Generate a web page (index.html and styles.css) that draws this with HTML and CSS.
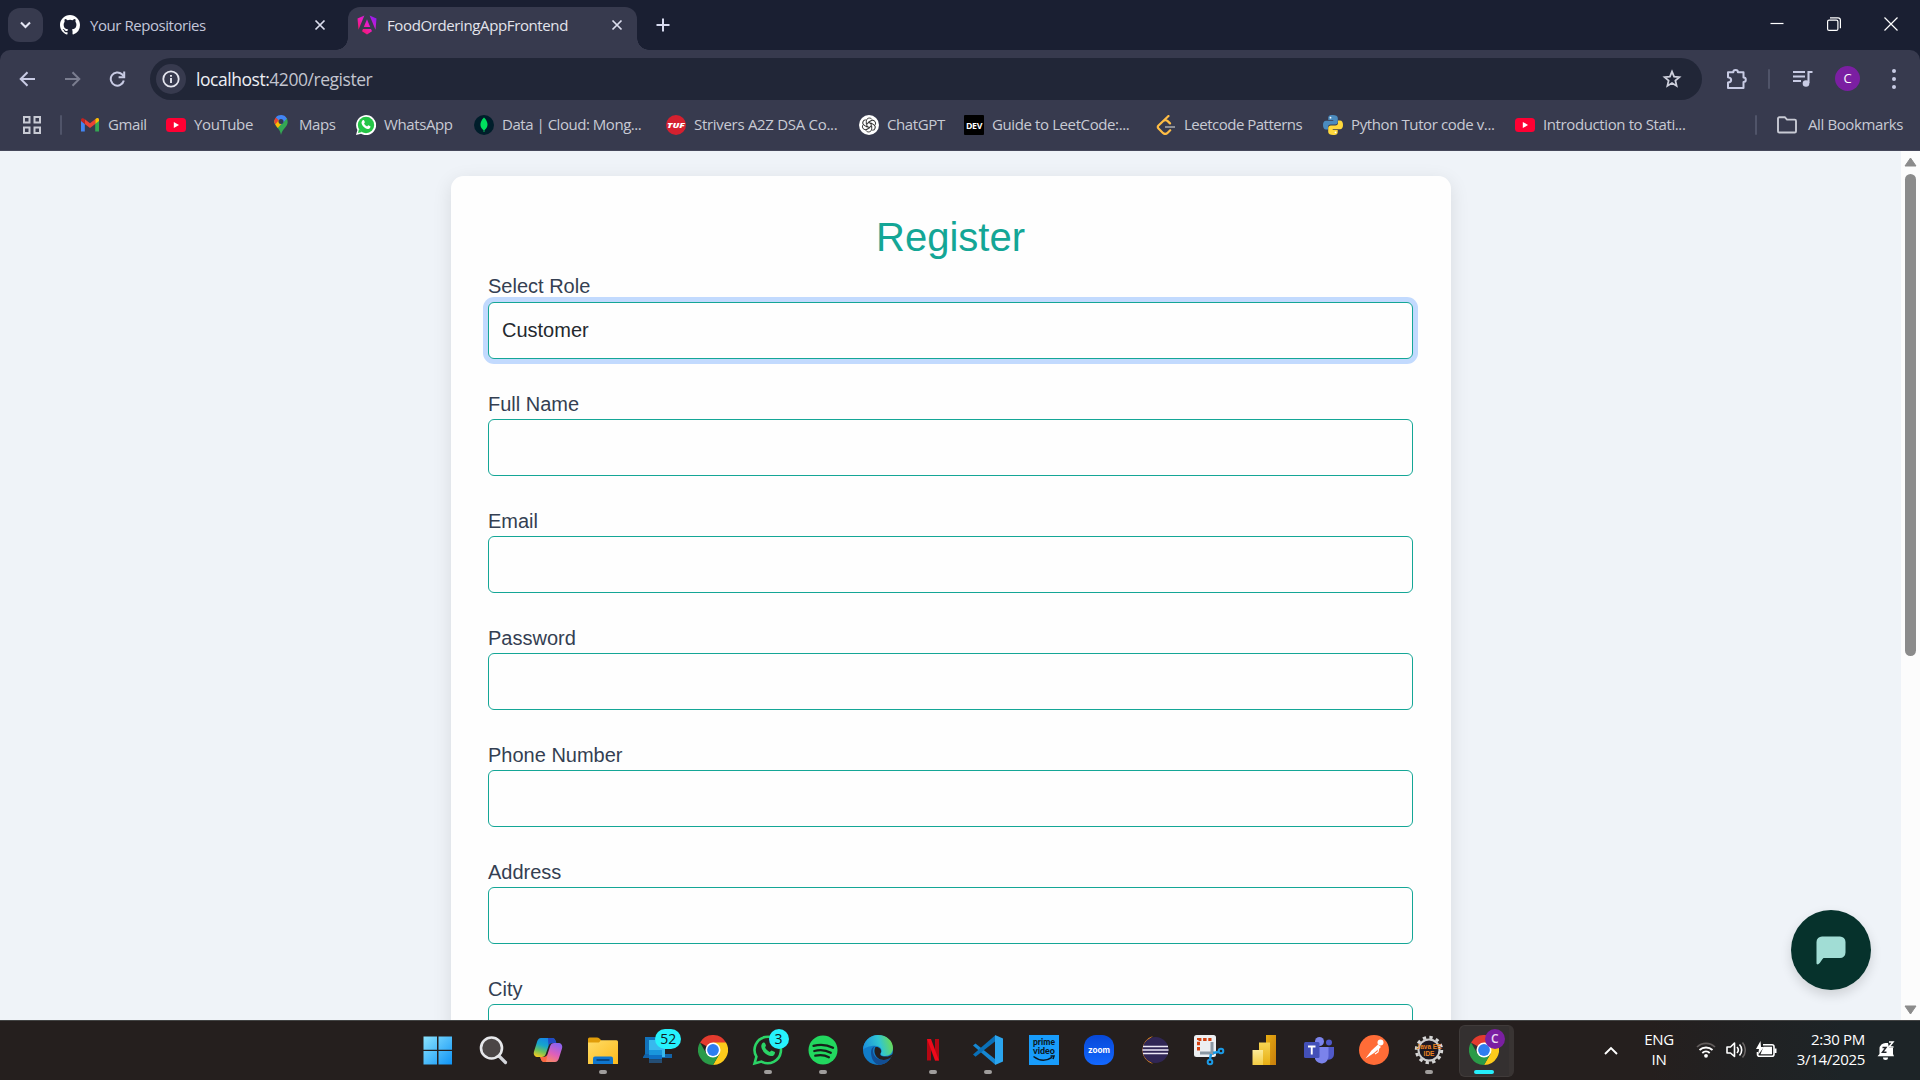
FILE: index.html
```html
<!DOCTYPE html>
<html lang="en">
<head>
<meta charset="utf-8">
<title>FoodOrderingAppFrontend</title>
<link rel="stylesheet" href="styles.css">
</head>
<body>
<svg class="defs" width="0" height="0" aria-hidden="true">
  <defs>
    <linearGradient id="ang" x1="0" y1="1" x2="1" y2="0"><stop offset="0" stop-color="#f5153f"/><stop offset=".5" stop-color="#ee1cc0"/><stop offset="1" stop-color="#7a1dfa"/></linearGradient>
    <linearGradient id="win" x1="0" y1="0" x2="1" y2="1"><stop offset="0" stop-color="#8be4ff"/><stop offset="1" stop-color="#0f93f5"/></linearGradient>
    <linearGradient id="copA" x1=".6" y1="0" x2=".2" y2="1"><stop offset="0" stop-color="#1583e8"/><stop offset=".4" stop-color="#16a5cb"/><stop offset=".7" stop-color="#6cc25b"/><stop offset="1" stop-color="#f5c921"/></linearGradient>
    <linearGradient id="copB" x1=".7" y1="0" x2=".2" y2="1"><stop offset="0" stop-color="#8d63f0"/><stop offset=".5" stop-color="#df5fba"/><stop offset="1" stop-color="#ff9157"/></linearGradient>
    <linearGradient id="fold" x1="0" y1="0" x2="1" y2="1"><stop offset="0" stop-color="#ffdc66"/><stop offset="1" stop-color="#fcba1c"/></linearGradient>
    <linearGradient id="edgeA" x1="0" y1=".5" x2="1" y2=".3"><stop offset="0" stop-color="#1c8fdc"/><stop offset=".55" stop-color="#30c5d3"/><stop offset="1" stop-color="#70dd4b"/></linearGradient>
    <linearGradient id="bar1" x1="0" y1="0" x2="1" y2="1"><stop offset="0" stop-color="#e8ad12"/><stop offset="1" stop-color="#c77d0c"/></linearGradient>
    <linearGradient id="bar2" x1="0" y1="0" x2="0" y2="1"><stop offset="0" stop-color="#f6d553"/><stop offset="1" stop-color="#e7ae13"/></linearGradient>
    <linearGradient id="bar3" x1="0" y1="0" x2="0" y2="1"><stop offset="0" stop-color="#fbea98"/><stop offset="1" stop-color="#f3cc43"/></linearGradient>
    <linearGradient id="zm" x1="0" y1="0" x2="0" y2="1"><stop offset="0" stop-color="#0748d8"/><stop offset="1" stop-color="#1368ff"/></linearGradient>
    <symbol id="i-close" viewBox="0 0 12 12"><path d="M1.5 1.5l9 9M10.5 1.5l-9 9" fill="none" stroke="currentColor" stroke-width="1.7"/></symbol>
    <symbol id="i-youtube" viewBox="0 0 20 20"><rect y="3" width="20" height="14" rx="3.5" fill="#ff0033"/><path d="M7.8 6.9v6.2l5.2-3.1z" fill="#fff"/></symbol>
    <symbol id="i-chrome" viewBox="0 0 30 30">
      <path d="M15 15L2 7.5A15 15 0 0 1 28 7.5z" fill="#e33b2e"/>
      <path d="M15 7.5h13A15 15 0 0 1 15 30l6.5-11.2z" fill="#fdcb1b"/>
      <path d="M2 7.5A15 15 0 0 0 15 30l6.5-11.2L15 15l-6.5 3.8z" fill="#2a9b48"/>
      <circle cx="15" cy="15" r="7.5" fill="#fff"/><circle cx="15" cy="15" r="5.9" fill="#2e7df0"/>
    </symbol>
  </defs>
</svg>

<header class="browser">
  <div class="tabstrip">
    <button class="tab-search"><svg width="11" height="8" viewBox="0 0 11 8"><path d="M1 1.5l4.5 4.5L10 1.5" fill="none" stroke="#e4e6f4" stroke-width="2.1"/></svg></button>
    <div class="tab">
      <svg width="20" height="20" viewBox="0 0 16 16"><path fill="#fff" d="M8 0C3.58 0 0 3.58 0 8c0 3.54 2.29 6.53 5.47 7.59.4.07.55-.17.55-.38v-1.49c-2.01.37-2.53-.49-2.69-.94-.09-.23-.48-.94-.82-1.13-.28-.15-.68-.52-.01-.53.63-.01 1.08.58 1.23.82.72 1.21 1.87.87 2.33.66.07-.52.28-.87.51-1.07-1.78-.2-3.64-.89-3.64-3.95 0-.87.31-1.59.82-2.15-.08-.2-.36-1.02.08-2.12 0 0 .67-.21 2.2.82a7.6 7.6 0 0 1 4 0c1.53-1.04 2.2-.82 2.2-.82.44 1.1.16 1.92.08 2.12.51.56.82 1.27.82 2.15 0 3.07-1.87 3.75-3.65 3.95.29.25.54.73.54 1.48v2.2c0 .21.15.46.55.38A8 8 0 0 0 16 8c0-4.42-3.58-8-8-8z"/></svg>
      <span class="tab-title">Your Repositories</span>
      <svg class="tab-close" width="12" height="12"><use href="#i-close"/></svg>
    </div>
    <div class="tab tab-active">
      <svg width="20" height="20" viewBox="0 0 20 20"><path fill="url(#ang)" d="M12.6.5l6.9 3-1 11.3zM7.4.5L.5 3.500l1 11.300zM15 16.200L10 19.500l-5-3.300 1-2.200h8zM6.800 12L10 4.300l3.200 7.700z"/></svg>
      <span class="tab-title">FoodOrderingAppFrontend</span>
      <svg class="tab-close" width="12" height="12"><use href="#i-close"/></svg>
    </div>
    <svg class="new-tab" width="14" height="14" viewBox="0 0 14 14"><path d="M7 .5v13M.5 7h13" stroke="#d8dbf0" stroke-width="2"/></svg>
    <div class="window-buttons">
      <svg width="14" height="14" viewBox="0 0 14 14"><path d="M.5 6.500h13" stroke="#fff" stroke-width="1.200"/></svg>
      <svg width="14" height="14" viewBox="0 0 14 14"><rect x=".6" y="3.100" width="10.300" height="10.300" rx="1.500" fill="none" stroke="#fff" stroke-width="1.200"/><path d="M3 .8h8a2.400 2.400 0 0 1 2.400 2.400v8" fill="none" stroke="#fff" stroke-width="1.200"/></svg>
      <svg width="14" height="14" viewBox="0 0 14 14"><path d="M.5.5l13 13M13.500.5l-13 13" stroke="#fff" stroke-width="1.200"/></svg>
    </div>
  </div>

  <div class="toolbar">
    <div class="nav">
      <svg width="17" height="16" viewBox="0 0 17 16"><path d="M16 8H2M8.500 1.200L1.700 8l6.800 6.800" fill="none" stroke="#c8cbe4" stroke-width="2"/></svg>
      <svg width="17" height="16" viewBox="0 0 17 16"><path d="M1 8h14M8.500 1.200L15.300 8l-6.800 6.800" fill="none" stroke="#7a7d8f" stroke-width="2"/></svg>
      <svg width="17" height="16" viewBox="0 0 17 16"><path d="M14.800 9.500A6.600 6.600 0 1 1 13 3.300l1.800 1.900" fill="none" stroke="#c8cbe4" stroke-width="2"/><path d="M15.200.6v5.600H9.600" fill="none" stroke="#c8cbe4" stroke-width="2"/></svg>
    </div>
    <div class="omnibox">
      <span class="site-info"><svg width="18" height="18" viewBox="0 0 18 18"><circle cx="9" cy="9" r="7.700" fill="none" stroke="#e4e5ee" stroke-width="1.800"/><path d="M9 8v5M9 5v1.800" stroke="#e4e5ee" stroke-width="1.900"/></svg></span>
      <span class="url"><b>localhost:</b>4200/register</span>
      <svg width="20" height="20" viewBox="0 0 20 20"><path d="M10 2.600l2.100 5 5.300.5-4 3.500 1.200 5.300L10 14.100l-4.600 2.800 1.200-5.300-4-3.500 5.300-.5z" fill="none" stroke="#ced0dc" stroke-width="1.800"/></svg>
    </div>
    <div class="tools">
      <svg width="22" height="22" viewBox="0 0 22 22"><path d="M2 4.200h5.300a2.300 2.300 0 0 1 4.600 0h5.600v5.300a2.300 2.300 0 0 1 0 4.600V20H2v-5.500c4.200-.5 4.200-4.700 0-5.200z" fill="none" stroke="#c8cbe4" stroke-width="2" stroke-linejoin="round"/></svg>
      <i class="divider"></i>
      <svg width="20" height="18" viewBox="0 0 20 18"><path d="M0 2h12M0 6.500h12M0 11h8M15.500 13V2h4" fill="none" stroke="#c8cbe4" stroke-width="2.100"/><circle cx="13" cy="13.500" r="3.300" fill="#c8cbe4"/></svg>
      <span class="avatar">C</span>
      <svg width="4" height="22" viewBox="0 0 4 22" fill="#c8cbe4"><circle cx="2" cy="3" r="2"/><circle cx="2" cy="11" r="2"/><circle cx="2" cy="19" r="2"/></svg>
    </div>
  </div>

  <nav class="bookmarks">
    <svg class="apps" width="18" height="18" viewBox="0 0 18 18"><path d="M1 1h5.500v5.500H1zM11.500 1H17v5.500h-5.500zM1 11.500h5.500V17H1zM11.500 11.500H17V17h-5.500z" fill="none" stroke="#c8cad4" stroke-width="2"/></svg>
    <i class="divider"></i>
    <div class="mark gmail"><svg viewBox="0 0 20 20"><path d="M1 5v11.500h3.800V9z" fill="#4285f4"/><path d="M15.200 9v7.500H19V5z" fill="#34a853"/><path d="M15.200 4.300V9L19 6V4.800c0-2-2-2.500-3.800-.5z" fill="#fbbc04"/><path d="M4.800 9V4.200L10 8.200l5.200-4V9L10 13z" fill="#ea4335"/><path d="M1 6l3.800 3V4.200C3 2.500 1 3 1 5z" fill="#c5221f"/></svg><span>Gmail</span></div>
    <div class="mark youtube"><svg><use href="#i-youtube"/></svg><span>YouTube</span></div>
    <div class="mark maps"><svg viewBox="0 0 20 20"><path d="M10 20c-.6-3.500-1.600-4.800-3.300-7C5 10.800 3.300 9.300 3.300 6.600L15.600 3c2.300 4.500.5 7.400-1.800 10-1.900 2.300-2.900 3.700-3.800 7z" fill="#34a853"/><path d="M6.800 13L15 3.500 9.500 2 3.500 5c-.5 3.300 1.300 5.500 3.300 8z" fill="#fbbc04"/><path d="M3.400 6.400c0-1.700.5-2.900 1.500-4L8 5 4.200 9.400c-.5-.8-.8-1.700-.8-3z" fill="#ea4335"/><path d="M4.800 2.400C7.800-1 13.800-.8 15.800 3.500L10.500 9.500 8 5.300z" fill="#4285f4"/><circle cx="10" cy="6.600" r="2.500" fill="#343a54"/></svg><span>Maps</span></div>
    <div class="mark whatsapp"><svg viewBox="0 0 20 20"><path d="M0 20l1.400-5A10 10 0 1 1 5 18.700z" fill="#fff"/><circle cx="10" cy="10" r="8.200" fill="#25c546"/><path d="M2 18l1-4 3 3z" fill="#25c546"/><path d="M6.700 5.200c.8-.5 1.300-.2 1.600.5l.6 1.500-.8 1.300c.6 1.300 1.500 2.200 3 2.900l1.100-1.100 2.200 1c.4 1.500-1.100 2.900-2.600 2.600-3.200-.5-5.800-3.200-6.300-6 0-1.100.5-2.100 1.200-2.700z" fill="#fff"/></svg><span>WhatsApp</span></div>
    <div class="mark mongo"><svg viewBox="0 0 20 20"><circle cx="10" cy="10" r="10" fill="#001e2b"/><path d="M10 2.500c5 5 4.300 10 .4 12.700V17h-.8v-1.800C5.700 12.500 5 7.500 10 2.500z" fill="#00df5e"/></svg><span>Data | Cloud: Mong...</span></div>
    <div class="mark tuf"><svg viewBox="0 0 20 20"><circle cx="10" cy="10" r="10" fill="#d5202f"/><text x="10" y="12.700" text-anchor="middle" font-size="7.500" font-weight="800" font-style="italic" fill="#fff" letter-spacing="0" textLength="18" lengthAdjust="spacingAndGlyphs">TUF</text></svg><span>Strivers A2Z DSA Co...</span></div>
    <div class="mark chatgpt"><svg viewBox="0 0 20 20"><circle cx="10" cy="10" r="10" fill="#fff"/><g fill="none" stroke="#333" stroke-width="1"><path id="petal" d="M10 7.500L7.300 9.100V6.200c0-3.300 4.200-4.200 5.700-1.700"/><use href="#petal" transform="rotate(60 10 10)"/><use href="#petal" transform="rotate(120 10 10)"/><use href="#petal" transform="rotate(180 10 10)"/><use href="#petal" transform="rotate(240 10 10)"/><use href="#petal" transform="rotate(300 10 10)"/></g></svg><span>ChatGPT</span></div>
    <div class="mark dev"><svg viewBox="0 0 20 20"><rect width="20" height="20" rx="1" fill="#000"/><text x="10" y="13.800" text-anchor="middle" font-size="9.500" font-weight="700" fill="#fff" textLength="16" lengthAdjust="spacingAndGlyphs">DEV</text></svg><span>Guide to LeetCode:...</span></div>
    <div class="mark leet"><svg viewBox="0 0 20 20"><path d="M12.500 1L2.500 10.500c-1 1-1 2 0 3l4.200 4.200c1.500 1.500 3.500 1.500 5 0l2.500-2.500M7 6.200c2-1.800 3.500-1.300 5 .2l2 2" fill="none" stroke="#ffbd45" stroke-width="2.200" stroke-linecap="round"/><path d="M9 12h10" stroke="#8c8e96" stroke-width="2"/></svg><span>Leetcode Patterns</span></div>
    <div class="mark python"><svg viewBox="0 0 20 20"><path d="M9.800 0C5.500 0 5.300 1.500 5.300 3v2h5v.8H3C1 5.800 0 7.500 0 10s1 4.500 3 4.500h2v-2.300c0-1.700 1-2.700 2.700-2.700h4.600c1.400 0 2.500-1 2.500-2.500V3c0-2-2-3-5-3z" fill="#4b8bbe"/><path d="M10.200 20c4.300 0 4.500-1.500 4.500-3v-2h-5v-.8H17c2 0 3-1.700 3-4.200s-1-4.500-3-4.500h-2v2.300c0 1.700-1 2.700-2.700 2.700H7.700c-1.400 0-2.500 1-2.500 2.500v4c0 2 2 3 5 3z" fill="#ffd83b"/><circle cx="7.500" cy="2.700" r=".9" fill="#fff"/><circle cx="12.500" cy="17.300" r=".9" fill="#fff"/></svg><span>Python Tutor code v...</span></div>
    <div class="mark stats"><svg><use href="#i-youtube"/></svg><span>Introduction to Stati...</span></div>
    <i class="divider end"></i>
    <div class="mark all"><svg viewBox="0 0 20 20"><path d="M1 3.500a1.300 1.300 0 0 1 1.300-1.300h5.500L10 4.600h7.700A1.300 1.300 0 0 1 19 5.900v10.300a1.300 1.300 0 0 1-1.300 1.300H2.300A1.300 1.300 0 0 1 1 16.200z" fill="none" stroke="#c8cad4" stroke-width="1.900"/></svg><span>All Bookmarks</span></div>
  </nav>
</header>

<div class="viewport">
  <main class="page">
    <form class="card">
      <h2>Register</h2>
      <div class="field role"><label>Select Role</label><div class="control focused">Customer</div></div>
      <div class="field"><label>Full Name</label><div class="control"></div></div>
      <div class="field"><label>Email</label><div class="control"></div></div>
      <div class="field"><label>Password</label><div class="control"></div></div>
      <div class="field"><label>Phone Number</label><div class="control"></div></div>
      <div class="field"><label>Address</label><div class="control"></div></div>
      <div class="field"><label>City</label><div class="control"></div></div>
    </form>
    <div class="chat"><svg width="30" height="29" viewBox="0 0 30 29"><path d="M6 .5h18a5.500 5.500 0 0 1 5.500 5.500v10.500A5.500 5.500 0 0 1 24 22H7.500c-1.500 1-3 5-5.300 6.300C1 28.700.5 28 .5 27V6A5.500 5.500 0 0 1 6 .5z" fill="#a1ddd5"/></svg></div>
  </main>
  <div class="scrollbar">
    <svg width="13" height="10" viewBox="0 0 13 10"><path d="M6.500 1L12 9H1z" fill="#8b8b8b" stroke="#8b8b8b" stroke-linejoin="round"/></svg>
    <i class="thumb"></i>
    <svg width="13" height="10" viewBox="0 0 13 10"><path d="M6.500 9L12 1H1z" fill="#8b8b8b" stroke="#8b8b8b" stroke-linejoin="round"/></svg>
  </div>
</div>

<footer class="taskbar">
  <div class="apps-row">
    <div class="app"><svg viewBox="0 0 30 30"><path d="M.5 1.500H14v13.200H.5zM15.500 1.500H29v13.200H15.500zM.5 16H14v13.500H.5zM15.500 16H29v13.500H15.500z" fill="url(#win)"/></svg></div>
    <div class="app"><svg viewBox="0 0 30 30"><path d="M21 21l6.500 6.500" stroke="#d3d5da" stroke-width="3.200" stroke-linecap="round"/><circle cx="13.500" cy="13" r="10.500" fill="#4b4646" stroke="#e6e7ea" stroke-width="2.600"/></svg></div>
    <div class="app"><svg viewBox="0 0 30 30"><path d="M8 3h11c2 0 3 1 3.600 3l.7 2H19c-2 0-3 1-3.500 3l-2.700 8c-.7 2-1.800 3-4 3H5c-3 0-5-2-4-5.500L4 7c.8-2.600 2-4 4-4z" fill="url(#copA)"/><path d="M15 3h4c2 0 3 1 3.600 3l.7 2H19c-2 0-3 1-3.500 3z" fill="#2249c5"/><path d="M22 27H11.500c-2 0-3-1-3.600-3l-.6-2H11c2 0 3-1 3.600-3l2.600-8c.6-2 1.800-3 4-3H25c3 0 5 2 4 5.500L26 23c-.8 2.600-2 4-4 4z" fill="url(#copB)"/><path d="M7.300 22H11c2 0 3-1 3.600-3L13 27h-1.500c-2 0-3-1-3.600-3z" fill="#fb6742"/></svg></div>
    <div class="app run"><svg viewBox="0 0 30 30"><path d="M0 4a1.500 1.500 0 0 1 1.500-1.500H9c1 0 1.700.4 2.400 1L13 5v5H0z" fill="#e19d09"/><path d="M0 7.500h11l2-2.300h15.500A1.500 1.500 0 0 1 30 6.700V29H0z" fill="url(#fold)"/><path d="M5 29v-5.500a2 2 0 0 1 2-2h16a2 2 0 0 1 2 2V29z" fill="#0f76cf"/><path d="M8.500 25h13" stroke="#063b70" stroke-width="1.600"/></svg></div>
    <div class="app"><svg viewBox="0 0 30 30"><path d="M2 2h18v19H2z" fill="#1172bb"/><path d="M0 22l2-3h27v4H0z" fill="#1263a9"/><path d="M6 5h16v17H6z" fill="#38b9ee"/><path d="M6 15h13v5H6z" fill="#1996dc"/><path d="M6 20h13v4.500H6z" fill="#0e70c4"/><path d="M6 24.500h13V28H6z" fill="#254e75"/></svg><span class="badge wide">52</span></div>
    <div class="app"><svg><use href="#i-chrome"/></svg></div>
    <div class="app run"><svg viewBox="0 0 30 30"><path d="M1.500 28.500l1.900-6.800A13.200 13.200 0 1 1 8.500 26.600z" fill="none" stroke="#2bd466" stroke-width="2.600"/><path d="M10 7.800c1-.6 1.800-.2 2.200.8l.8 2-.9 2c1 2 2.500 3.400 4.500 4.500l2-1.600 3.300 1.500c.5 2.500-2 4.400-4 4-4.700-.8-9-5-9.600-9.200-.2-1.700.6-3.300 1.700-4z" fill="#2bd466"/></svg><span class="badge round">3</span></div>
    <div class="app run"><svg viewBox="0 0 30 30"><circle cx="15" cy="15" r="14.500" fill="#22d75f"/><path d="M5.500 10.800c7-1.800 13.500-1.200 19.500 2M6.300 16c6-1.600 11.500-1 16.500 1.800M7.300 20.700c5-1.200 9.500-.7 13.600 1.600" fill="none" stroke="#16201a" stroke-width="2.300" stroke-linecap="round"/></svg></div>
    <div class="app"><svg viewBox="0 0 30 30"><circle cx="15" cy="15" r="15" fill="#117cc9"/><path d="M0 15C0 6.500 7 0 15 0c9 0 15 6 15 13 0 5-3.500 8-8 8-3 0-5-1.300-4-3 2-3.500-1-7.300-6-7.300C6 10.700 1 13 0 15z" fill="url(#edgeA)"/><path d="M8 17c0-3 1.500-5 4-6-5 5 0 14 8 14 3 0 5.500-.8 7.500-2C24 28 20 30 15.500 30 10 28 8 22 8 17z" fill="#124e94"/><path d="M12.500 12c3.500-.5 6.500 2.500 5.500 5.500-1.500 1.500-1 3.500 3 4 4 .4 6.500-.5 9.500-3.500l-2.500 4.500c-7 5-15.500 2-16.500-5.500-.2-2 .3-3.800 1-5z" fill="#251f1f"/></svg></div>
    <div class="app run"><svg viewBox="0 0 30 30"><path d="M9 4h4v21.500H9zM17 4h4v21.500h-4z" fill="#b50713"/><path d="M9 4h4l8 21.500h-4z" fill="#ee0a1b"/></svg></div>
    <div class="app run"><svg viewBox="0 0 30 30"><path d="M0 10.500l2.500-2L22 24v5.500z" fill="#1687d2"/><path d="M0 19.500l2.500 2.200L22 6.500V.5z" fill="#0a70b8"/><path d="M22 0l8 3.500v23L22 30z" fill="#2ba5ef"/></svg></div>
    <div class="app"><svg viewBox="0 0 30 30"><path d="M0 0h30v30H0z" fill="#189cfb"/><g font-family="Lato, sans-serif" font-weight="900" font-size="8.500" fill="#0b1620" text-anchor="middle"><text x="15" y="9.500" textLength="22" lengthAdjust="spacingAndGlyphs">prime</text><text x="15" y="18.500" textLength="22" lengthAdjust="spacingAndGlyphs">video</text></g><path d="M4.500 21.500c6 4.500 13 4.500 18.500.8M21.500 21h3.500l-1 3" fill="none" stroke="#0b1620" stroke-width="1.500"/></svg></div>
    <div class="app"><svg viewBox="0 0 30 30"><rect width="30" height="30" rx="12" fill="url(#zm)"/><text x="15" y="17.500" text-anchor="middle" font-family="Inter, sans-serif" font-weight="700" font-size="8" textLength="22" lengthAdjust="spacingAndGlyphs" fill="#fff">zoom</text></svg></div>
    <div class="app"><svg viewBox="0 0 30 30"><path d="M14 1a14.500 14.500 0 0 0 0 28A17 17 0 0 1 14 1z" fill="#f5921e"/><circle cx="16.500" cy="15" r="13" fill="#302655"/><path d="M4 11.500h25M3.500 15h26M4 18.500h25" stroke="#ece8f6" stroke-width="1.700"/></svg></div>
    <div class="app"><svg viewBox="0 0 30 30"><rect x="0" y="0" width="22" height="22" rx="2.500" fill="#eceff2"/><path d="M4.500 15.500V4.500h13" fill="none" stroke="#d24010" stroke-width="3" stroke-dasharray="3.500 1.700"/><path d="M18 7v13M6 18h14" stroke="#8b98a3" stroke-width="3"/><path d="M17 19l-1 5M19 18l5-1" stroke="#1c9ae5" stroke-width="2.500"/><circle cx="16" cy="27" r="2.300" fill="none" stroke="#1c9ae5" stroke-width="2"/><circle cx="27" cy="16" r="2.300" fill="none" stroke="#1c9ae5" stroke-width="2"/></svg></div>
    <div class="app"><svg viewBox="0 0 30 30"><path d="M17 0h10v30H17z" fill="url(#bar1)"/><path d="M10 7.500h11V30H10z" fill="url(#bar2)"/><path d="M3.500 15H14v15H3.500z" fill="url(#bar3)"/></svg></div>
    <div class="app"><svg viewBox="0 0 30 30"><circle cx="15.500" cy="6.500" r="4.500" fill="#7b83eb"/><circle cx="25" cy="7.500" r="3" fill="#5059c9"/><path d="M21 12h9v7c0 4-4 7-8 5z" fill="#5059c9"/><path d="M11 12h13.500v9a7 7 0 0 1-13.500 3z" fill="#7b83eb"/><rect y="7" width="15.500" height="16" rx="1.500" fill="#4350b8"/><path d="M4 11.500h7.500M7.750 11.500v8" stroke="#fff" stroke-width="1.900"/></svg></div>
    <div class="app"><svg viewBox="0 0 30 30"><circle cx="15" cy="15" r="15" fill="#ff6c37"/><circle cx="21.500" cy="7.500" r="3" fill="#fff"/><path d="M19 9.500l3 2.500-7 6-8.500 5.500 6-8z" fill="#fff"/><path d="M20 12l-1 5-3 2" fill="none" stroke="#fff" stroke-width="1.200"/></svg></div>
    <div class="app run"><svg viewBox="0 0 30 30"><circle cx="15" cy="15" r="12.700" fill="none" stroke="#d6d6d6" stroke-width="3" stroke-dasharray="3.300 3.350"/><circle cx="15" cy="15" r="10.500" fill="#1c1822" stroke="#cdcdcd" stroke-width="2"/><g font-family="Liberation Sans, sans-serif" font-size="6.500" font-weight="700" fill="#ec8420" text-anchor="middle"><text x="15" y="14">Java EE</text><text x="15" y="20.500">IDE</text></g></svg></div>
    <div class="app active"><svg><use href="#i-chrome"/></svg><span class="badge profile">C</span></div>
  </div>
  <div class="tray">
    <svg class="chev" width="14" height="9" viewBox="0 0 14 9"><path d="M1 8l6-6 6 6" fill="none" stroke="#fff" stroke-width="1.900"/></svg>
    <div class="lang">ENG<br>IN</div>
    <svg class="wifi" width="20" height="18" viewBox="0 0 20 18"><path d="M1 6a13 13 0 0 1 18 0" fill="none" stroke="#625d5c" stroke-width="1.700"/><path d="M3.500 9a9.500 9.500 0 0 1 13 0M6.300 12a5.500 5.500 0 0 1 7.400 0" fill="none" stroke="#fff" stroke-width="1.900"/><circle cx="10" cy="14.800" r="1.900" fill="#fff"/></svg>
    <svg class="vol" width="20" height="18" viewBox="0 0 20 18"><path d="M1 6h3.500L8.500 2v13.500L4.500 12H1z" fill="none" stroke="#fff" stroke-width="1.600" stroke-linejoin="round"/><path d="M11 6a4.500 4.500 0 0 1 0 6M13.500 3.500a8 8 0 0 1 0 11" fill="none" stroke="#fff" stroke-width="1.600"/><path d="M16.500 1.500a11.500 11.500 0 0 1 0 15" fill="none" stroke="#6b6665" stroke-width="1.500"/></svg>
    <svg class="bat" width="21" height="18" viewBox="0 0 21 18"><path d="M7 3.800h9a2 2 0 0 1 2 2v7.500a2 2 0 0 1-2 2H3.500a2 2 0 0 1-2-2V11" fill="none" stroke="#fff" stroke-width="1.600"/><path d="M7.500 5.800H16v7.500H4.500z" fill="#fff"/><path d="M19.500 7.500v4.500" stroke="#fff" stroke-width="2"/><path d="M4.500 0L0 8h3l-1 6 6-8H5z" fill="#fff"/></svg>
    <div class="clock">2:30 PM<br>3/14/2025</div>
    <svg class="bell" width="18" height="19" viewBox="0 0 18 19"><path d="M2.500 13V8A6 6 0 0 1 9 2h2l1 5h4v6l1 2.200H.5z" fill="#fff"/><path d="M6 16.500h5a2.500 2.500 0 0 1-5 0z" fill="#fff"/><path d="M5.500 6.500H9l-3.500 4.700h4" fill="none" stroke="#22252a" stroke-width="1.500"/><path d="M12 1h4l-4 5h4.500" fill="none" stroke="#fff" stroke-width="1.500"/></svg>
  </div>
</footer>
</body>
</html>
```
FILE: styles.css
```css
* { box-sizing: border-box; }

body {
  margin: 0;
  width: 1920px;
  height: 1080px;
  overflow: hidden;
  display: flex;
  flex-direction: column;
  font-family: "Open Sans", "Noto Sans", sans-serif;
}

svg { display: block; flex: none; }
.defs { position: absolute; }

/* Browser chrome */
.browser { height: 151px; flex: none; background: #1a1f32; color: #c8cad4; font-size: 15px; }

.tabstrip { display: flex; height: 50px; padding-left: 8px; }
.tab-search {
  width: 35px; height: 34px; margin: 8px 5px 0 0; padding: 0;
  border: 0; border-radius: 12px; background: #373a4e;
  display: flex; align-items: center; justify-content: center;
}
.tab {
  position: relative;
  display: flex; align-items: center; gap: 10px;
  width: 300px; height: 43px; margin-top: 7px; padding: 0 22px 7px 12px;
  color: #c3c6da;
}
.tab-active {
  width: 289px; padding: 0 14px 7px 9px;
  background: #373a4e; border-radius: 12px 12px 0 0; color: #e3e4ec;
}
.tab-active::before, .tab-active::after {
  content: ""; position: absolute; bottom: 0; width: 12px; height: 12px;
}
.tab-active::before { left: -12px; background: radial-gradient(circle at 0 0, transparent 11.5px, #373a4e 12px); }
.tab-active::after { right: -12px; background: radial-gradient(circle at 100% 0, transparent 11.5px, #373a4e 12px); }
.tab-title { flex: 1; padding-bottom: 1px; white-space: nowrap; letter-spacing: -0.45px; }
.tab-active .tab-title { letter-spacing: -0.38px; }
.tab-close { color: #dcdeee; }
.new-tab { margin: 18px 0 0 19px; }
.window-buttons { display: flex; gap: 43px; margin: 17px 22px 0 auto; }

.toolbar {
  display: flex; align-items: center; height: 51px; padding-top: 7px;
  background: #373a4e; border-radius: 10px 10px 0 0;
}
.nav { display: flex; gap: 28px; width: 150px; padding: 0 0 1px 19px; }
.omnibox {
  display: flex; align-items: center; width: 1552px; height: 42px;
  padding: 0 20px 0 6px; border-radius: 21px; background: #212637;
}
.site-info {
  display: flex; align-items: center; justify-content: center;
  width: 30px; height: 30px; border-radius: 50%; background: #373a4e;
}
.url { flex: 1; margin-left: 10px; font-size: 17.5px; letter-spacing: -0.46px; color: #c3c5cf; }
.url b { font-weight: 400; color: #eeeff4; }
.tools { display: flex; align-items: center; padding: 0 0 1px 24px; }
.divider { width: 2px; height: 20px; border-radius: 1px; background: #505469; }
.tools .divider { margin: 0 23px 0 20px; }
.avatar {
  width: 25px; height: 25px; margin: 0 32px 0 22px; border-radius: 50%;
  background: #7b1fa2; color: #fff; font-size: 13px; line-height: 25px; text-align: center;
}

.bookmarks {
  display: flex; align-items: center; height: 50px; padding: 0 0 2px 23px;
  background: #373a4e; border-bottom: 1px solid #45475a;
}
.bookmarks .divider { margin: 0 18px 0 19px; }
.mark { display: flex; align-items: center; gap: 8px; white-space: nowrap; letter-spacing: -0.39px; }
.mark > span { padding-bottom: 2px; }
.mark svg { width: 20px; height: 20px; }
.gmail { width: 86px; }
.youtube { width: 105px; }
.maps { width: 85px; }
.whatsapp { width: 118px; }
.mongo { width: 192px; letter-spacing: -0.47px; }
.tuf { width: 193px; letter-spacing: -0.3px; }
.chatgpt { width: 105px; }
.dev { width: 192px; }
.leet { width: 167px; letter-spacing: -0.5px; }
.python { width: 192px; }
.bookmarks .end { margin: 0 20px 0 auto; }
.all { width: 143px; gap: 11px; }

/* Page */
.viewport { display: flex; height: 869px; flex: none; }
.page {
  position: relative; width: 1901px; overflow: hidden; padding: 25px 0 0 451px;
  background: #eff3f8; font-family: "Liberation Sans", Arial, sans-serif;
}
.card {
  width: 1000px; height: 1300px; padding: 37px 38px 37px 37px;
  border-radius: 12.5px; background: #fefefe; box-shadow: 0 5px 19px rgba(0, 0, 0, .1);
}
h2 { margin: 0 0 10px; color: #14a696; font-size: 40px; line-height: 48px; font-weight: 400; text-align: center; }
.field { margin-bottom: 30px; font-size: 20px; line-height: 30px; }
label { display: block; color: #343f52; }
.role label { padding-bottom: 1px; }
.control {
  height: 57px; padding: 12px 13px; border: 1px solid #14a696;
  border-radius: 6px; background: #fefefe; color: #24292e;
}
.focused { box-shadow: 0 0 0 5px #c2dafe; }
.chat {
  position: absolute; right: 30px; bottom: 30px; width: 80px; height: 80px;
  display: flex; align-items: center; justify-content: center;
  border-radius: 50%; background: #06322c; box-shadow: 0 5px 12px rgba(0, 0, 0, .14);
}
.scrollbar {
  display: flex; flex-direction: column; align-items: center;
  width: 19px; padding: 6px 0 5px; background: #fcfcfc;
}
.thumb { width: 11px; height: 482px; margin: 7px 0 auto; border-radius: 6px; background: #8b8b8b; }

/* Taskbar */
.taskbar {
  display: flex; height: 60px; flex: none; padding-left: 410px;
  border-top: 1px solid #424343; color: #fff;
  background: linear-gradient(90deg, #251f1e 0, #251f1e 86%, #1d2427 96%);
}
.apps-row { display: flex; }
.app { position: relative; display: flex; width: 55.1px; height: 58px; align-items: center; justify-content: center; }
.app > svg { width: 30px; height: 30px; overflow: visible; }
.run::after, .active::after {
  content: ""; position: absolute; bottom: 5px; left: 23.500px;
  width: 8px; height: 4px; border-radius: 2px; background: #a09d9c;
}
.active::after { left: 17.500px; width: 20px; background: #26edfa; }
.active::before {
  content: ""; position: absolute; left: 2px; top: 4px; width: 49px; height: 50px;
  border: 1px solid #403b3a; border-right-width: 5px; border-right-color: #393433; border-radius: 6px; background: #343030;
}
.active > svg { position: relative; }
.badge {
  position: absolute; top: 8px; height: 20px; border-radius: 10px;
  background: #26f2fc; color: #102023; font-size: 14px; line-height: 19px; text-align: center;
}
.wide { left: 25px; width: 26px; }
.round { left: 28px; width: 20px; }
.profile { left: 28px; width: 20px; background: #7b1fa2; color: #eadcf2; font-size: 12px; font-weight: 600; }

.tray { display: flex; align-items: center; height: 58px; margin-left: auto; padding-right: 25px; font-size: 15px; line-height: 20px; letter-spacing: -0.3px; }
.lang { width: 40px; margin-left: 21px; padding-bottom: 2px; text-align: center; }
.wifi { margin-left: 17px; }
.vol { margin-left: 10px; }
.bat { margin-left: 10px; }
.clock { width: 88px; padding-bottom: 3px; text-align: right; white-space: nowrap; }
.bell { margin-left: 12px; }
```
